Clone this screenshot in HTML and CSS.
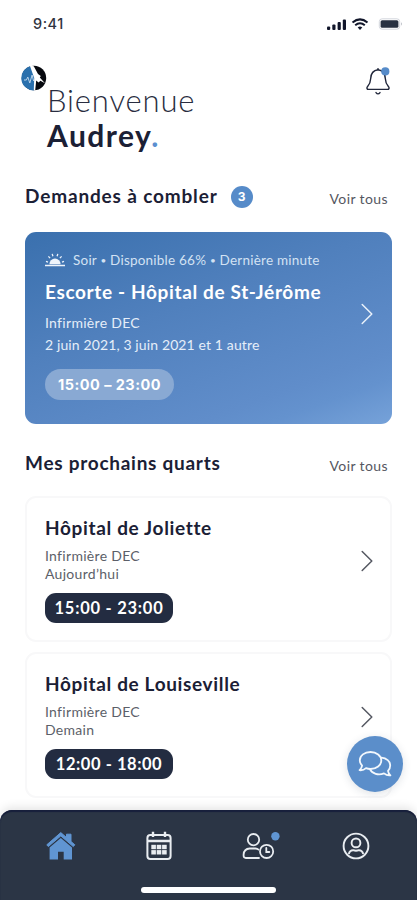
FILE: index.html
```
<!DOCTYPE html>
<html lang="fr">
<head>
<meta charset="utf-8">
<meta name="viewport" content="width=device-width, initial-scale=1">
<title>Accueil</title>
<link rel="stylesheet" href="styles.css">
</head>
<body>
<div class="app">
  <div class="status">
    <span class="time">9:41</span>
    <svg class="signals" width="78" height="14" viewBox="0 0 78 14">
      <g fill="#11162a">
        <rect x="1" y="8.5" width="3.2" height="3.5" rx="1"/><rect x="6.3" y="6.5" width="3.2" height="5.5" rx="1"/><rect x="11.6" y="4" width="3.2" height="8" rx="1"/><rect x="16.8" y="1.5" width="3.2" height="10.5" rx="1"/>
      </g>
      <g fill="none" stroke="#11162a" stroke-width="2">
        <path d="M26.5 4.5Q34 -1.7 41.5 4.5"/><path d="M29.2 7.2Q34 3.2 38.8 7.2"/>
      </g>
      <path d="M31.7 9.4Q34 7.7 36.3 9.4L34 12Z" fill="#11162a"/>
      <rect x="53.3" y=".8" width="20.4" height="10.4" rx="2.8" fill="#fff" stroke="#d3d6dd"/>
      <rect x="54.6" y="2.2" width="17.8" height="7.6" rx="1.6" fill="#283142"/>
      <path d="M75 4.3q2 1.7 0 3.4z" fill="#bfc2c9"/>
    </svg>
  </div>
  <header class="header">
    <svg class="logo" width="26" height="26" viewBox="0 0 26 26">
      <circle cx="13" cy="13" r="12.2" fill="#07090f"/>
      <path d="M10 .9A12.4 12.4 0 0 0 12.8 25.4L14 14Z" fill="#2a70ad"/>
      <path d="M8.8.5L12.8 1.2L17 9L19.8 11L18.8 12.6L24 18.3L19.4 15.8L17.6 17.4L15.2 15.4L14.2 25.3H12.8L13.2 13Z" fill="#fff"/>
      <path d="M3 15h2.4l1.4-3 2 6 2.3-8 1.5 6" fill="none" stroke="#b9d3ea" stroke-width="1"/>
    </svg>
    <h1 class="greeting"><span class="hello">Bienvenue</span><span class="name">Audrey<i>.</i></span></h1>
    <svg class="bell" width="28" height="32" viewBox="0 0 28 32">
      <g fill="none" stroke="#20263a" stroke-width="1.4" stroke-linejoin="round" stroke-linecap="round">
        <path d="M14 4.8C8.5 5.5 6.9 9 6.7 13.5C6.5 18.5 5.2 19.7 3.3 21.9C2.5 23.1 3 24.4 4.5 24.4H23.5C25 24.4 25.5 23.1 24.7 21.9C22.8 19.7 21.5 18.5 21.3 13.5C21.1 9 19.5 5.5 14 4.8Z"/>
        <path d="M14 3.6V4.4"/><path d="M12 27.6Q14 30.2 16 27.6"/>
      </g>
      <circle cx="21.3" cy="6.4" r="4.1" fill="#568bc9"/>
    </svg>
  </header>

  <div class="section first">
    <h2 class="heading demands">Demandes à combler</h2><span class="count">3</span><a class="all">Voir tous</a>
  </div>
  <article class="card featured">
    <div class="body">
      <p class="meta">
        <svg width="20" height="14" viewBox="0 0 20 14"><path d="M4.4 11.2a5.6 5.6 0 0 1 11.2 0z" fill="#eef4fb"/><path d="M0 12.5h20M1 8.4l2 .7M19 8.4l-2 .7M3.4 3.4l1.7 1.7M16.6 3.4l-1.7 1.7M7.2.9l.7 2.3M12.8.9l-.7 2.3" stroke="#eef4fb" stroke-width="1.3" fill="none"/></svg>
        <span>Soir <b>•</b> Disponible 66% <b>•</b> Dernière minute</span>
      </p>
      <h3 class="title escort">Escorte - Hôpital de St-Jérôme</h3>
      <p class="role">Infirmière DEC</p>
      <p class="dates">2 juin 2021, 3 juin 2021 et 1 autre</p>
      <span class="pill light">15:00 – 23:00</span>
    </div>
    <svg class="chevron" width="12" height="22" viewBox="0 0 12 22"><path d="M1.2 1.5L10.8 11L1.2 20.5"/></svg>
  </article>

  <div class="section second">
    <h2 class="heading shifts">Mes prochains quarts</h2><a class="all">Voir tous</a>
  </div>
  <article class="card shift">
    <div class="body">
      <h3 class="title">Hôpital de Joliette</h3>
      <p class="role">Infirmière DEC</p>
      <p class="role">Aujourd’hui</p>
      <span class="pill">15:00 - 23:00</span>
    </div>
    <svg class="chevron" width="12" height="22" viewBox="0 0 12 22"><path d="M1.2 1.5L10.8 11L1.2 20.5"/></svg>
  </article>
  <article class="card shift">
    <div class="body">
      <h3 class="title">Hôpital de Louiseville</h3>
      <p class="role">Infirmière DEC</p>
      <p class="role">Demain</p>
      <span class="pill noon">12:00 - 18:00</span>
    </div>
    <svg class="chevron" width="12" height="22" viewBox="0 0 12 22"><path d="M1.2 1.5L10.8 11L1.2 20.5"/></svg>
  </article>

  <div class="chat">
    <svg width="34" height="28" viewBox="0 0 34 28" fill="none" stroke="#f3f8fd" stroke-width="1.8" stroke-linejoin="round" stroke-linecap="round">
      <path d="M12.5 2C6.5 2 1.8 5.6 1.8 10.2C1.8 12.4 2.7 14.1 4.1 15.7C3.8 17.5 2.8 19 1.6 20.2C4.1 20.5 6.6 19.4 8 18.1C9.4 18.7 10.9 19 12.5 19C18.5 19 23.3 15.2 23.3 10.5C23.3 5.8 18.5 2 12.5 2Z"/>
      <path d="M23.4 7.7C28.5 8 32.2 11.4 32.2 15.5C32.2 17.6 31.4 19.5 30 20.9C30.2 22.6 31.2 24.2 32.4 25.3C29.8 25.7 27.5 24.6 26 23.4C20.4 25.7 14 23.8 11.9 19.2"/>
    </svg>
  </div>

  <nav class="nav">
    <div class="tabs">
      <svg width="32" height="30" viewBox="0 0 32 30"><path d="M1.8 13.8L15.8 1.6L21.5 6.5V3.2H26V10.5L29.8 13.8L28.3 15.6L15.8 4.9L3.3 15.6Z" fill="#6095d2" stroke="#6095d2" stroke-width="1"/><path d="M15.8 7.1L27 16.6V28.5H18.7V20.7H13V28.5H4.6V16.6Z" fill="#6095d2"/></svg>
      <svg class="calendar" width="28" height="32" viewBox="0 0 28 32" fill="none" stroke="#e9edf1"><rect x="2.4" y="5" width="23.2" height="24" rx="3" stroke-width="2"/><path d="M2.4 11h23.2M8 1.7V7M20 1.7V7" stroke-width="2.4"/><g fill="#e9edf1" stroke="none"><rect x="6.3" y="14.8" width="4.6" height="4.4"/><rect x="11.7" y="14.8" width="4.6" height="4.4"/><rect x="17.1" y="14.8" width="4.6" height="4.4"/><rect x="6.3" y="20.1" width="4.6" height="4.4"/><rect x="11.7" y="20.1" width="4.6" height="4.4"/><rect x="17.1" y="20.1" width="4.6" height="4.4"/></g></svg>
      <svg class="people" width="38" height="30" viewBox="0 0 38 30" fill="none" stroke="#e9edf1" stroke-width="1.8" stroke-linecap="round"><circle cx="11.5" cy="8.7" r="5.7"/><path d="M17 27H3.8Q1.6 27 1.6 24.8V23.6Q2 17.8 7.7 17.5H13.5Q15.3 17.7 16.5 18.6"/><circle cx="24.6" cy="20.4" r="6.6"/><path d="M24.3 17v4h3"/><circle cx="33.4" cy="5.3" r="4.2" fill="#6095d2" stroke="none"/></svg>
      <svg width="28" height="28" viewBox="0 0 28 28" fill="none" stroke="#e9edf1" stroke-width="1.9"><circle cx="14" cy="14" r="12.4"/><circle cx="14" cy="10.9" r="4.4"/><path d="M6.8 22C7.4 19.4 8.8 18.2 11 18.2Q14 19.2 17 18.2C19.2 18.2 20.6 19.4 21.2 22"/></svg>
    </div>
    <div class="indicator"></div>
  </nav>
</div>
</body>
</html>
```
FILE: styles.css
```
* { box-sizing: border-box; margin: 0; padding: 0; }
body { background: #fff; font-family: Lato, "Liberation Sans", sans-serif; color: #1b2035; }
.app { width: 417px; height: 900px; position: relative; overflow: hidden; }
svg { display: block; flex: none; }

.status { height: 46px; padding: 14px 13px 0 33px; display: flex; justify-content: space-between; align-items: flex-start; }
.time { font: 500 14.5px/20px Inter, sans-serif; color: #30343f; letter-spacing: .5px; }
.signals { margin: 4px 0 0; }

.header { height: 124px; padding: 19px 25px 0 21px; display: flex; }
.greeting { flex: 1; padding-top: 17px; font-weight: 400; }
.hello, .name { display: block; height: 36px; line-height: 36px; white-space: nowrap; }
.hello { font-size: 31px; font-weight: 300; letter-spacing: .85px; color: #292d40; }
.name { font-size: 30px; line-height: 35px; font-weight: 700; letter-spacing: 1.45px; }
.name i { font-style: normal; color: #5b8fd0; }

.section { display: flex; align-items: center; padding: 0 29px 0 25px; white-space: nowrap; }
.first { height: 62px; padding-bottom: 10px; }
.second { height: 73px; padding-top: 5px; }
.heading { font-size: 19px; line-height: 26px; font-weight: 700; }
.demands { letter-spacing: .84px; }
.shifts { letter-spacing: .73px; }
.count { width: 22px; height: 22px; margin: 2px 0 0 13px; border-radius: 50%; background: #568bc9; color: #fff; font: 700 12px/22px Inter, sans-serif; text-align: center; }
.all { margin-left: auto; padding-top: 6px; font-size: 14px; line-height: 18px; letter-spacing: .4px; color: #555761; }

.card { width: 367px; margin-left: 25px; display: flex; align-items: center; padding: 0 19px 0 20px; border-radius: 11px; }
.body { flex: 1; white-space: nowrap; align-self: flex-start; }
.featured { height: 192px; color: #fff; background: linear-gradient(160deg, #3a70ae 0%, #5080bd 40%, #608dca 78%, #6492ce 86%, #76a2d9 100%); }
.featured .body { padding-top: 18px; }
.chevron { fill: none; stroke: #555862; stroke-width: 1.5; stroke-linecap: round; stroke-linejoin: round; }
.featured .chevron { stroke: #e9f1fa; margin-bottom: 29px; }
.meta { display: flex; align-items: center; gap: 8px; height: 20px; font-size: 13.5px; letter-spacing: .22px; color: #d3e2f3; }
.meta b { font-size: 10px; font-weight: 400; vertical-align: 1px; }
.title { font-size: 19px; line-height: 26px; font-weight: 700; letter-spacing: .65px; }
.escort { margin-top: 9px; letter-spacing: .64px; }
.role, .dates { font-size: 14px; line-height: 18px; letter-spacing: .3px; }
.featured .role { margin-top: 9px; color: #e5eef9; }
.dates { margin-top: 4px; color: #e5eef9; letter-spacing: .12px; }
.pill { display: block; width: 128px; height: 30px; margin-top: 9px; border-radius: 11px; background: #232c41; color: #fff; font: 700 16.5px/30px Lato, sans-serif; letter-spacing: .75px; text-align: center; }
.light { width: 129px; height: 31px; margin-top: 15px; border-radius: 15.5px; background: #89a9d3; font: 700 14.5px/32px Inter, sans-serif; letter-spacing: .45px; }
.noon { letter-spacing: .55px; }

.shift { height: 146px; margin-bottom: 10px; border: 2px solid #f8f8f9; background: #fff; padding: 0 17px 0 18px; }
.second + .shift { margin-top: -1px; }
.shift .body { padding-top: 17px; }
.shift .role { color: #5c5f69; }
.shift .title + .role { margin-top: 6px; }
.shift .pill { margin-top: 10px; }
.shift .chevron { margin-bottom: 17px; }

.chat { position: absolute; left: 347px; top: 736px; width: 56px; height: 56px; border-radius: 50%; background: #5b8eca; box-shadow: 0 2px 8px rgba(40,60,90,.15); display: flex; align-items: center; justify-content: center; }

.nav { position: absolute; left: 0; right: 0; bottom: 0; height: 90px; border-radius: 12px 12px 0 0; background: #2b3545; box-shadow: inset 0 2px 1px #171f3b, 0 -3px 10px rgba(0,0,0,.1); }
.tabs { display: flex; justify-content: space-between; align-items: center; height: 72px; padding: 0 47px 0 45px; }
.calendar { margin-left: 3px; }
.people { margin: 0 -3px 0 4px; }
.indicator { width: 135px; height: 6px; margin: 5px auto 0; border-radius: 3px; background: #fff; }
```
